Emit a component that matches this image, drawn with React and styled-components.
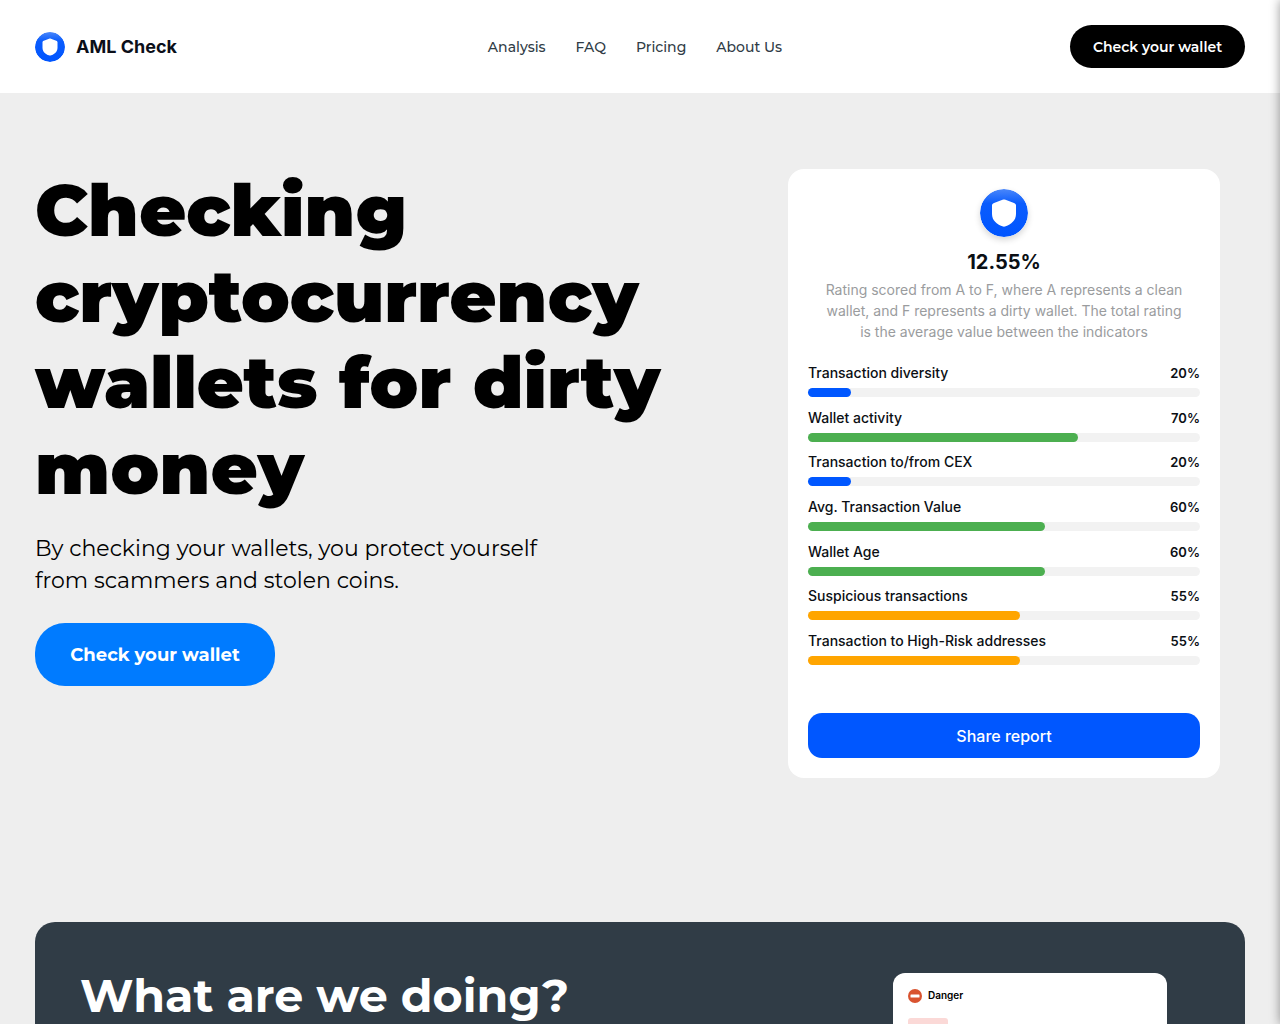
import React from "react";
import styled, { createGlobalStyle } from "styled-components";

const GlobalStyle = createGlobalStyle`
  *, *::before, *::after { box-sizing: border-box; }
  html { background: #eeeeee; }
  body {
    margin: 0;
    color: #000;
    font-family: Montserrat, Inter, "Liberation Sans", sans-serif;
  }
  h1, h2, h3, p, ul { margin: 0; padding: 0; }
  button { border: 0; font-family: inherit; cursor: pointer; }
`;

const Page = styled.div`
  position: relative;
  height: 100vh;
  overflow: hidden;
`;

/* Off-canvas menu parked past the right edge; only its shadow is visible. */
const Drawer = styled.aside`
  position: absolute;
  top: 0;
  left: 100%;
  width: 300px;
  height: 100%;
  background: #fff;
  box-shadow: 0 0 10px rgba(0, 0, 0, 0.4);
`;

const Header = styled.header`
  display: flex;
  align-items: center;
  justify-content: space-between;
  min-height: 93px;
  padding: 25px 35px;
  background: #fff;
`;

const Brand = styled.a`
  display: flex;
  align-items: center;
  gap: 11px;
  min-width: 165px;
  color: #0b0f19;
  font: 700 18px/24px Inter, "Liberation Sans", sans-serif;
  text-decoration: none;
`;

const Nav = styled.nav`
  display: flex;
  gap: 30px;
`;

const NavLink = styled.a`
  color: #303c46;
  font-size: 14px;
  font-weight: 500;
  line-height: 20px;
  text-decoration: none;
`;

const HeaderButton = styled.button`
  padding: 0 21px;
  min-width: 175px;
  height: 43px;
  border-radius: 22px;
  background: #000;
  color: #fff;
  font-size: 14px;
  font-weight: 600;
`;

const Hero = styled.section`
  display: flex;
  align-items: flex-start;
  justify-content: space-between;
  padding: 74px 60px 144px 35px;
`;

const Intro = styled.div`
  flex: 0 1 640px;
`;

const Title = styled.h1`
  font-size: 72px;
  font-weight: 900;
  line-height: 86px;
`;

const Lead = styled.p`
  max-width: 540px;
  margin-top: 22px;
  font-size: 22px;
  line-height: 32px;
`;

const HeroButton = styled.button`
  margin-top: 26px;
  min-width: 240px;
  height: 63px;
  border-radius: 30px;
  background: #007bff;
  color: #fff;
  font-size: 18px;
  font-weight: 700;
`;

const ReportCard = styled.article`
  display: flex;
  flex-direction: column;
  align-items: center;
  flex: 0 0 432px;
  min-height: 609px;
  margin-top: 2px;
  padding: 20px;
  border-radius: 16px;
  background: #fff;
  color: #0b0f14;
  font-family: Inter, "Liberation Sans", sans-serif;
`;

const Score = styled.h3`
  margin-top: 11px;
  font-size: 20px;
  font-weight: 700;
  line-height: 28px;
`;

const Note = styled.p`
  max-width: 360px;
  margin-top: 3px;
  color: #9a9c9e;
  font-size: 14px;
  line-height: 21px;
  text-align: center;
`;

const Metrics = styled.ul`
  display: flex;
  flex: 1;
  flex-direction: column;
  justify-content: space-between;
  align-self: stretch;
  margin: 20px 0 48px;
  list-style: none;
`;

const MetricLabel = styled.div`
  display: flex;
  align-items: baseline;
  justify-content: space-between;
  font-size: 14px;
  font-weight: 500;
  line-height: 21px;
`;

const MetricValue = styled.span`
  font-size: 13px;
  font-weight: 600;
`;

const Track = styled.div`
  height: 9px;
  margin-top: 4px;
  border-radius: 5px;
  background: #f2f2f2;
`;

const Fill = styled.div`
  height: 100%;
  border-radius: 5px;
  background: ${(p) => p.$color};
`;

const ShareButton = styled.button`
  align-self: stretch;
  height: 45px;
  border-radius: 14px;
  background: #0057ff;
  color: #fff;
  font-size: 16px;
  font-weight: 500;
`;

const About = styled.section`
  display: flex;
  align-items: flex-start;
  justify-content: space-between;
  margin: 0 35px 60px;
  padding: 46px 78px 46px 45px;
  border-radius: 20px;
  background: #303c46;
`;

const AboutTitle = styled.h2`
  color: #fff;
  font-size: 46px;
  font-weight: 700;
  line-height: 56px;
`;

const DangerCard = styled.article`
  flex: 0 0 274px;
  min-height: 300px;
  margin-top: 5px;
  padding: 15px;
  border-radius: 12px;
  background: #fff;
  font-family: Inter, "Liberation Sans", sans-serif;
`;

const DangerHead = styled.div`
  display: flex;
  align-items: center;
  gap: 6px;
  font-size: 10px;
  font-weight: 600;
  line-height: 15px;
`;

const DangerTile = styled.div`
  width: 40px;
  height: 40px;
  margin-top: 15px;
  border-radius: 3px;
  background: #fbd9d7;
`;

const ShieldSvg = styled.svg`
  flex: none;
  display: block;
  border-radius: 50%;
  box-shadow: ${(p) => (p.$raised ? "0 3px 6px rgba(0, 0, 0, 0.16)" : "none")};
`;

function Shield({ size, id, raised }) {
  return (
    <ShieldSvg width={size} height={size} viewBox="0 0 48 48" aria-hidden="true" $raised={raised}>
      <defs>
        <linearGradient id={id} x1="0" y1="0" x2="0" y2="1">
          <stop offset="0" stopColor="#4a87fa" />
          <stop offset="0.3" stopColor="#0a5cfd" />
          <stop offset="1" stopColor="#0055ff" />
        </linearGradient>
      </defs>
      <circle cx="24" cy="24" r="24" fill={`url(#${id})`} />
      <path
        d="M24 10.5c.5 0 1 .1 1.500.3l8.500 3.100c1.300.5 2 1.300 2 2.600V25c0 6.500-5 10.300-10.300 12.300-1.200.5-2.200.5-3.400 0C17 35.300 12 31.500 12 25v-8.500c0-1.300.7-2.100 2-2.600l8.500-3.100c.5-.2 1-.3 1.500-.3z"
        fill="#fff"
      />
    </ShieldSvg>
  );
}

const NAV = ["Analysis", "FAQ", "Pricing", "About Us"];

const BLUE = "#0057ff";
const GREEN = "#4caf50";
const ORANGE = "#ffa500";

const METRICS = [
  { label: "Transaction diversity", value: 20, bar: 11, color: BLUE },
  { label: "Wallet activity", value: 70, bar: 69, color: GREEN },
  { label: "Transaction to/from CEX", value: 20, bar: 11, color: BLUE },
  { label: "Avg. Transaction Value", value: 60, bar: 60.4, color: GREEN },
  { label: "Wallet Age", value: 60, bar: 60.4, color: GREEN },
  { label: "Suspicious transactions", value: 55, bar: 54, color: ORANGE },
  { label: "Transaction to High-Risk addresses", value: 55, bar: 54, color: ORANGE },
];

export default function App() {
  return (
    <Page>
      <GlobalStyle />
      <Header>
        <Brand href="#">
          <Shield size={30} id="brand-shield" />
          AML Check
        </Brand>
        <Nav>
          {NAV.map((item) => (
            <NavLink key={item} href="#">{item}</NavLink>
          ))}
        </Nav>
        <HeaderButton>Check your wallet</HeaderButton>
      </Header>
      <main>
        <Hero>
          <Intro>
            <Title>Checking cryptocurrency wallets for dirty money</Title>
            <Lead>By checking your wallets, you protect yourself from scammers and stolen coins.</Lead>
            <HeroButton>Check your wallet</HeroButton>
          </Intro>
          <ReportCard>
            <Shield size={48} id="report-shield" raised />
            <Score>12.55%</Score>
            <Note>
              Rating scored from A to F, where A represents a clean wallet, and F represents a dirty
              wallet. The total rating is the average value between the indicators
            </Note>
            <Metrics>
              {METRICS.map((m) => (
                <li key={m.label}>
                  <MetricLabel>
                    <span>{m.label}</span>
                    <MetricValue>{m.value}%</MetricValue>
                  </MetricLabel>
                  <Track>
                    <Fill $color={m.color} style={{ width: `${m.bar}%` }} />
                  </Track>
                </li>
              ))}
            </Metrics>
            <ShareButton>Share report</ShareButton>
          </ReportCard>
        </Hero>
        <About>
          <AboutTitle>What are we doing?</AboutTitle>
          <DangerCard>
            <DangerHead>
              <svg width="14" height="14" viewBox="0 0 14 14" aria-hidden="true">
                <circle cx="7" cy="7" r="7" fill="#d9532f" />
                <rect x="2.500" y="5.500" width="9" height="3" rx="0.6" fill="#fff" />
              </svg>
              Danger
            </DangerHead>
            <DangerTile />
          </DangerCard>
        </About>
      </main>
      <Drawer aria-hidden="true" />
    </Page>
  );
}
